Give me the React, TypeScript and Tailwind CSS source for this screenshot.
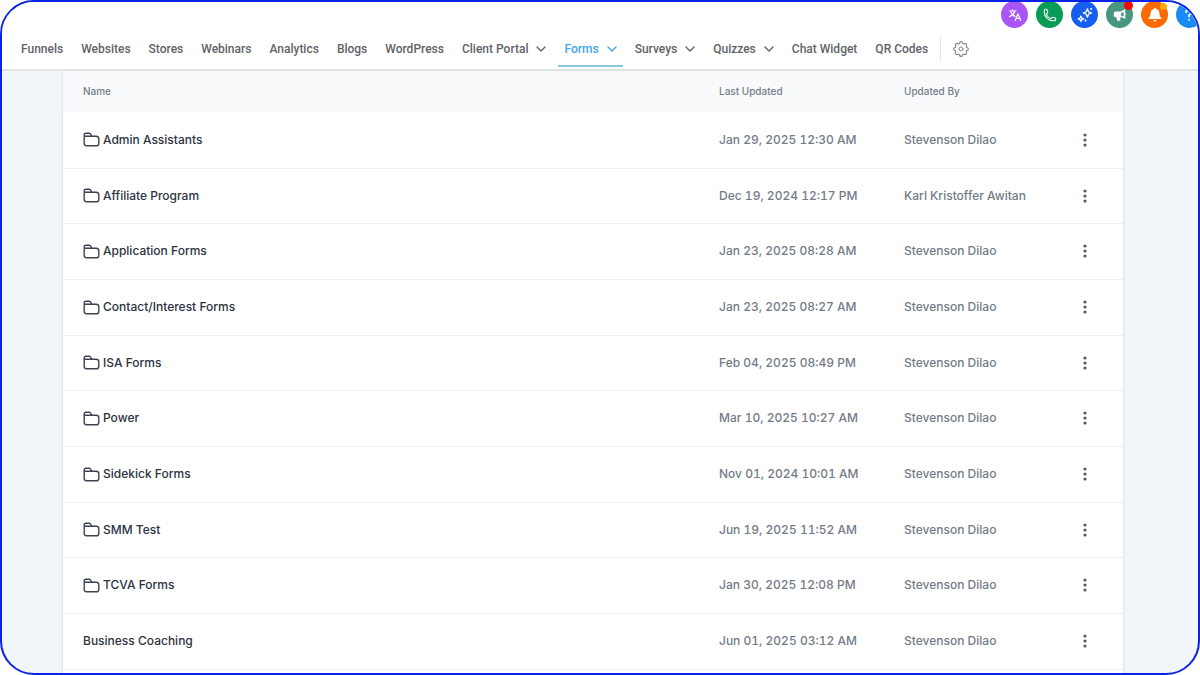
import type { ReactNode } from "react";

type NavItem = { label: string; menu?: boolean; active?: boolean };

const navItems: NavItem[] = [
  { label: "Funnels" },
  { label: "Websites" },
  { label: "Stores" },
  { label: "Webinars" },
  { label: "Analytics" },
  { label: "Blogs" },
  { label: "WordPress" },
  { label: "Client Portal", menu: true },
  { label: "Forms", menu: true, active: true },
  { label: "Surveys", menu: true },
  { label: "Quizzes", menu: true },
  { label: "Chat Widget" },
  { label: "QR Codes" },
];

type FormRow = { name: string; updated: string; by: string; folder: boolean };

const rows: FormRow[] = [
  { name: "Admin Assistants", updated: "Jan 29, 2025 12:30 AM", by: "Stevenson Dilao", folder: true },
  { name: "Affiliate Program", updated: "Dec 19, 2024 12:17 PM", by: "Karl Kristoffer Awitan", folder: true },
  { name: "Application Forms", updated: "Jan 23, 2025 08:28 AM", by: "Stevenson Dilao", folder: true },
  { name: "Contact/Interest Forms", updated: "Jan 23, 2025 08:27 AM", by: "Stevenson Dilao", folder: true },
  { name: "ISA Forms", updated: "Feb 04, 2025 08:49 PM", by: "Stevenson Dilao", folder: true },
  { name: "Power", updated: "Mar 10, 2025 10:27 AM", by: "Stevenson Dilao", folder: true },
  { name: "Sidekick Forms", updated: "Nov 01, 2024 10:01 AM", by: "Stevenson Dilao", folder: true },
  { name: "SMM Test", updated: "Jun 19, 2025 11:52 AM", by: "Stevenson Dilao", folder: true },
  { name: "TCVA Forms", updated: "Jan 30, 2025 12:08 PM", by: "Stevenson Dilao", folder: true },
  { name: "Business Coaching", updated: "Jun 01, 2025 03:12 AM", by: "Stevenson Dilao", folder: false },
];

function ChevronIcon() {
  return (
    <svg viewBox="0 0 10 6" className="h-[6px] w-[10px]" fill="none" stroke="currentColor" strokeWidth="1.4" strokeLinecap="round" strokeLinejoin="round" aria-hidden="true">
      <path d="M1 1l4 4 4-4" />
    </svg>
  );
}

function FolderIcon() {
  return (
    <svg viewBox="0 0 17 15" className="h-[15px] w-[17px] shrink-0" fill="none" stroke="#3d4450" strokeWidth="1.4" strokeLinecap="round" strokeLinejoin="round" aria-hidden="true">
      <path d="M1.2 4.200V3Q1.2 1.2 3 1.2h3.100Q7 1.2 7.500 2L8.800 4.200M1.2 4.200h12Q15.800 4.200 15.800 6.400v5Q15.800 13.800 13.400 13.800H3.600Q1.200 13.800 1.200 11.400z" />
    </svg>
  );
}

function DotsIcon() {
  return (
    <svg viewBox="0 0 4 14" className="h-[14px] w-[4px]" fill="#525a66" aria-hidden="true">
      <circle cx="2" cy="2" r="1.6" />
      <circle cx="2" cy="7" r="1.6" />
      <circle cx="2" cy="12" r="1.6" />
    </svg>
  );
}

function GearIcon() {
  return (
    <svg viewBox="0 0 24 24" className="size-[16px]" fill="none" stroke="#85898e" strokeWidth="1.500" strokeLinecap="round" strokeLinejoin="round" aria-hidden="true">
      <path d="M10.300 4.300c.430-1.760 2.970-1.760 3.400 0a1.720 1.720 0 002.570 1.070c1.540-.940 3.310.830 2.370 2.370a1.720 1.720 0 001.060 2.570c1.760.430 1.760 2.940 0 3.370a1.720 1.720 0 00-1.060 2.570c.940 1.540-.830 3.310-2.370 2.370a1.720 1.720 0 00-2.570 1.060c-.430 1.760-2.970 1.760-3.400 0a1.720 1.720 0 00-2.570-1.060c-1.540.940-3.310-.830-2.370-2.370a1.720 1.720 0 00-1.060-2.570c-1.760-.430-1.760-2.940 0-3.370a1.720 1.720 0 001.060-2.570c-.940-1.540.830-3.310 2.370-2.370a1.720 1.720 0 002.570-1.070z" transform="translate(12 12) scale(1.22) translate(-12 -12)" />
      <circle cx="12" cy="12" r="3" />
    </svg>
  );
}

function RoundButton({ label, color, children }: { label: string; color: string; children: ReactNode }) {
  return (
    <button type="button" aria-label={label} className={`relative flex size-[27px] shrink-0 items-center justify-center rounded-full text-white ${color}`}>
      {children}
    </button>
  );
}

function Toolbar() {
  return (
    <div className="-mt-px -mr-[5px] flex justify-end gap-2">
      <RoundButton label="Translate" color="bg-[#a855f7]">
        <svg viewBox="0 0 14 14" className="size-[14px]" fill="none" stroke="currentColor" strokeWidth="1.2" strokeLinecap="round" strokeLinejoin="round" aria-hidden="true">
          <path d="M1.500 3h6.500M4.500 1.800V3M6.800 3.200Q5.500 7 1.500 8.600M3 4.600Q4.500 7.500 7 8.400M7.200 12.500l2.700-6.700 2.800 6.700M8.100 10.400h3.700" />
        </svg>
      </RoundButton>
      <RoundButton label="Call" color="bg-[#079b55]">
        <svg viewBox="0 0 24 24" className="size-[14px]" fill="none" stroke="currentColor" strokeWidth="1.900" strokeLinecap="round" strokeLinejoin="round" aria-hidden="true">
          <path d="M2.250 6.750c0 8.284 6.716 15 15 15h2.250a2.250 2.250 0 002.250-2.250v-1.372c0-.516-.351-.966-.852-1.091l-4.423-1.106c-.440-.110-.902.055-1.173.417l-.970 1.293c-.282.376-.769.542-1.210.380a12.035 12.035 0 01-7.143-7.143c-.162-.441.004-.928.380-1.210l1.293-.970c.363-.271.527-.734.417-1.173L6.963 3.102a1.125 1.125 0 00-1.091-.852H4.500A2.250 2.250 0 002.250 4.500v2.250z" />
        </svg>
      </RoundButton>
      <RoundButton label="AI assistant" color="bg-[#155eef]">
        <svg viewBox="0 0 16 16" className="size-[16px]" fill="none" stroke="currentColor" strokeWidth="1.300" strokeLinejoin="round" aria-hidden="true">
          <path d="M10.400 1.800l1.200 3 3 1.200-3 1.200-1.200 3-1.200-3-3-1.200 3-1.200zM3.900 9l.8 2 2 .8-2 .8-.8 2-.8-2-2-.8 2-.8z" />
          <path d="M14.200 1v1.800M13.300 1.900h1.800M8.500 12.600v1.800M7.600 13.500h1.800" />
        </svg>
      </RoundButton>
      <RoundButton label="Announcements" color="bg-[#479681]">
        <svg viewBox="0 0 14 14" className="size-[14px]" fill="currentColor" aria-hidden="true">
          <path fillRule="evenodd" d="M12.300.9v10.200L8.700 9.200H7.300v3.500H4.200L3.400 9.200H2.400Q.8 9.200.8 7.600V5.200Q.8 3.600 2.400 3.600h5.200zM10.600 3.900L8 5.200v2.400l2.600 1.200z" />
          <path d="M12.700 4.700q1.200 1.300 0 2.600z" />
        </svg>
        <span className="absolute top-0 right-0 size-[9px] rounded-full bg-[#fb0404]" />
      </RoundButton>
      <RoundButton label="Notifications" color="bg-[#fd6a02]">
        <svg viewBox="0 0 14 16" className="h-[16px] w-[14px]" fill="currentColor" aria-hidden="true">
          <path d="M7 .8q.9 0 1 1.100 3.400.8 3.400 4.300 0 3.600 2 5v.9H.6v-.9q2-1.400 2-5 0-3.500 3.400-4.300Q6.100.8 7 .8zM5.400 12.900h3.200Q8.400 14.500 7 14.500t-1.600-1.600z" />
        </svg>
        <span className="absolute top-[2px] right-[1px] size-[7px] rounded-full bg-[#fdab08]" />
      </RoundButton>
      <RoundButton label="Help" color="bg-[#188bf6]">
        <svg viewBox="0 0 12 16" className="h-[16px] w-[12px]" fill="none" stroke="currentColor" strokeWidth="1.800" strokeLinecap="round" aria-hidden="true">
          <path d="M2.200 5.200Q2.200 2.600 5 2.600T7.800 5.200Q7.800 6.800 5 8v1.400M5 12.700v.1" />
        </svg>
      </RoundButton>
    </div>
  );
}

const itemBase = "flex h-[37px] items-center gap-2 border-b-2 px-1.5 pt-0.5 whitespace-nowrap";

function MainNav() {
  return (
    <nav aria-label="Sites" className="flex items-center gap-1.5 py-0.5 pl-[13px] font-['Roboto',sans-serif] text-xs font-medium">
      {navItems.map((item) =>
        item.menu ? (
          <button
            key={item.label}
            type="button"
            aria-haspopup="menu"
            className={item.active ? `${itemBase} border-[#8cc5e0] text-[#45a5ea]` : `${itemBase} border-transparent text-[#5f6368]`}
          >
            {item.label}
            <ChevronIcon />
          </button>
        ) : (
          <a key={item.label} href="#" className={`${itemBase} border-transparent text-[#5f6368]`}>
            {item.label}
          </a>
        ),
      )}
      <div className="flex items-center gap-3">
        <span className="h-6 w-px bg-[#e2e5e8]" />
        <button type="button" aria-label="Settings">
          <GearIcon />
        </button>
      </div>
    </nav>
  );
}

function FormsTable() {
  return (
    <table className="w-full table-fixed border-collapse text-left text-xs font-medium">
      <colgroup>
        <col />
        <col className="w-[185px]" />
        <col className="w-[163px]" />
        <col className="w-[76px]" />
      </colgroup>
      <thead>
        <tr className="h-[41px] bg-[#f9fafc] text-[10px] text-[#747c88]">
          <th scope="col" className="pl-5 font-medium">Name</th>
          <th scope="col" className="pl-5 font-medium">Last Updated</th>
          <th scope="col" className="pl-5 font-medium">Updated By</th>
          <th scope="col" aria-label="Actions" />
        </tr>
      </thead>
      <tbody>
        {rows.map((row) => (
          <tr key={row.name} className="h-14 border-b border-[#edf0f3] text-[#737b87] nth-[3n+2]:h-[55px]">
            <td className="pl-5 text-[#2c333f]">
              <div className="flex items-center gap-[3px]">
                {row.folder && <FolderIcon />}
                {row.name}
              </div>
            </td>
            <td className="pl-5 whitespace-nowrap tabular-nums">{row.updated}</td>
            <td className="pl-5 whitespace-nowrap">{row.by}</td>
            <td>
              <button type="button" aria-label={`Actions for ${row.name}`} className="mx-auto flex size-6 items-center justify-center">
                <DotsIcon />
              </button>
            </td>
          </tr>
        ))}
      </tbody>
    </table>
  );
}

export default function App() {
  return (
    <div className="min-h-screen bg-white">
      <div className="flex min-h-screen flex-col overflow-hidden rounded-[34px] border-2 border-[#0a22e6] bg-[#f0f6f9] font-['Inter',sans-serif]">
        <header className="border-b-2 border-[#e3e6e8] bg-white">
          <Toolbar />
          <MainNav />
        </header>
        <main className="flex flex-1 flex-col pr-[75px] pl-[61px]">
          <section aria-label="Forms" className="flex-1 bg-white shadow-[0_1px_3px_rgba(16,24,40,0.14)]">
            <FormsTable />
          </section>
        </main>
      </div>
    </div>
  );
}
